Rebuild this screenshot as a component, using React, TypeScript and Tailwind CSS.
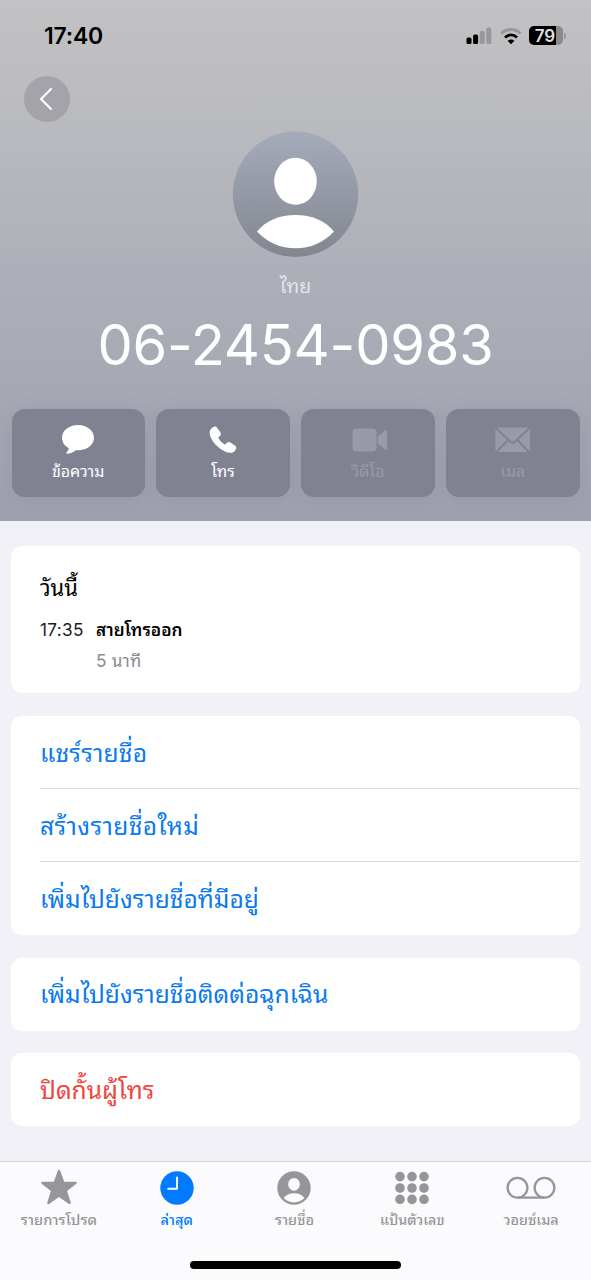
import type { ReactNode } from "react";

type Action = {
  label: string;
  icon: ReactNode;
  disabled?: boolean;
};

type Tab = {
  label: string;
  icon: ReactNode;
  labelClass: string;
  active?: boolean;
};

const actions: Action[] = [
  { label: "ข้อความ", icon: <MessageIcon /> },
  { label: "โทร", icon: <PhoneIcon /> },
  { label: "วิดีโอ", icon: <VideoIcon />, disabled: true },
  { label: "เมล", icon: <MailIcon />, disabled: true },
];

const tabs: Tab[] = [
  { label: "รายการโปรด", icon: <StarIcon />, labelClass: "text-[14.700px]" },
  { label: "ล่าสุด", icon: <ClockIcon />, labelClass: "text-[14.500px]", active: true },
  { label: "รายชื่อ", icon: <PersonIcon />, labelClass: "text-[14.500px]" },
  { label: "แป้นตัวเลข", icon: <KeypadIcon />, labelClass: "text-[14.300px]" },
  { label: "วอยซ์เมล", icon: <VoicemailIcon />, labelClass: "text-[14.300px] pl-[2px]" },
];

function MessageIcon() {
  return (
    <svg width="34" height="32" viewBox="0 0 34 32" fill="currentColor">
      <path d="M17 1C8 1 1 6.700 1 13.700c0 4.300 2.500 8 6.500 10.300.4.300.4.700.2 1.200-.4 1-1.100 2-2 3-.6.700-.2 1.500.7 1.500 2.900-.1 5.500-1.400 7.600-3 .5-.4.900-.4 1.500-.4H17c9 0 16-5.600 16-12.600S26 1 17 1Z" />
    </svg>
  );
}

function PhoneIcon() {
  return (
    <svg width="28" height="28" viewBox="0 0 28 28" fill="currentColor">
      <path d="M.7 5.900C.8 3.500 3 1.300 5.100.7c1.300-.3 2.300.2 3.100 1.300l3.100 4.300c.8 1.200.7 2.400-.2 3.400L9.700 11.200c-.4.400-.4.800-.1 1.300 1.300 2.200 3.500 4.300 5.700 5.700.6.300 1 .3 1.400-.1l1.400-1.400c.9-.9 2.200-1 3.300-.2l4.500 3c1.100.8 1.500 1.800 1.200 2.900-.5 2.200-2.700 4.200-5 4.400-4.900.4-10.500-3.200-14.400-7.200C3.700 15.700.4 10.500.7 5.900Z" />
    </svg>
  );
}

function VideoIcon() {
  return (
    <svg className="ml-[5px]" width="36" height="24" viewBox="0 0 36 24" fill="currentColor">
      <rect x="0.500" y="0.500" width="24" height="23" rx="4" />
      <path d="M26 8.300 32.700 2.700c1.100-.9 2.300-.4 2.300.9v16.800c0 1.300-1.200 1.800-2.300.9L26 15.700Z" />
    </svg>
  );
}

function MailIcon() {
  return (
    <svg width="36" height="26" viewBox="0 0 36 26">
      <rect x="0.500" y="0.500" width="34.500" height="24.500" rx="2" fill="currentColor" />
      <path
        d="m1 1 14.500 13.800c1.500 1.400 3.100 1.400 4.600 0L34.500 1M1.500 25 13 13M34 25 22.500 13"
        fill="none"
        stroke="#808292"
        strokeWidth="2"
      />
    </svg>
  );
}

function StarIcon() {
  return (
    <svg className="mb-[2px]" width="38" height="36" viewBox="0 0 38 36" fill="currentColor">
      <path
        d="m19 2 4.300 11.900h12.300l-9.900 7.700 3.900 12.300L19 26.600 8.400 33.900l3.900-12.300L2.400 13.900h12.300Z"
        stroke="currentColor"
        strokeWidth="2.400"
        strokeLinejoin="round"
      />
    </svg>
  );
}

function ClockIcon() {
  return (
    <svg width="34" height="34" viewBox="0 0 34 34">
      <circle cx="17" cy="17" r="16.700" fill="currentColor" />
      <path d="M17 6.500v11.300H8.200" fill="none" stroke="#fff" strokeWidth="1.900" strokeLinecap="round" strokeLinejoin="round" />
    </svg>
  );
}

function PersonIcon() {
  return (
    <svg width="34" height="34" viewBox="0 0 34 34">
      <circle cx="17" cy="17" r="16.700" fill="currentColor" />
      <ellipse cx="17" cy="13.300" rx="5.800" ry="6.400" fill="#fbfbfd" />
      <path d="M6.700 27.100C8.600 24 12.500 22.300 17 22.300s8.400 1.700 10.300 4.800C24.500 30 21 31.400 17 31.400S9.500 30 6.700 27.100Z" fill="#fbfbfd" />
    </svg>
  );
}

function KeypadIcon() {
  const columns = [5, 17, 29];
  const rows = [5.6, 17, 28.4];
  return (
    <svg width="34" height="34" viewBox="0 0 34 34" fill="currentColor">
      {rows.map((y) => columns.map((x) => <circle key={`${x}-${y}`} cx={x} cy={y} r="4.800" />))}
    </svg>
  );
}

function VoicemailIcon() {
  return (
    <svg className="ml-[2px]" width="50" height="24" viewBox="0 0 50 24" fill="none" stroke="currentColor" strokeWidth="2.300">
      <circle cx="11.500" cy="11.700" r="9.900" />
      <circle cx="38.500" cy="11.700" r="9.900" />
      <path d="M11.500 21.600h27" />
    </svg>
  );
}

function StatusBar() {
  return (
    <div className="flex h-[76px] items-start justify-between pt-[22px] pl-11 pr-[25px]">
      <span className="text-[23px] leading-[28px] font-semibold tracking-[-0.2px] text-black">17:40</span>
      <div className="flex items-center pt-[4px]">
        <svg width="27" height="19" viewBox="0 0 27 19">
          <rect x="0.500" y="11.500" width="5" height="6.500" rx="1.500" />
          <rect x="7.100" y="8.500" width="5" height="9.500" rx="1.500" />
          <rect x="13.700" y="5" width="5" height="13" rx="1.500" fill="#98989c" />
          <rect x="20.300" y="1.500" width="5" height="16.500" rx="1.500" fill="#98989c" />
        </svg>
        <svg className="ml-[7px]" width="22" height="18" viewBox="0 0 23 18" fill="none" strokeWidth="3">
          <path d="M1.300 6.400c5.900-5.600 14.500-5.600 20.400 0" stroke="#98989c" />
          <path d="M5.200 10.500c3.700-3.500 8.900-3.500 12.600 0" stroke="#000" />
          <path d="M8 14c1.900-1.900 5.100-1.900 7 0l-3.500 3.600Z" fill="#000" />
        </svg>
        <div className="ml-[7px] flex h-[19px] w-[34px] items-center justify-center rounded-[5px] bg-[linear-gradient(90deg,#000_80%,#8a8a8e_80%)] text-[17px] leading-none font-semibold text-[#e0e0e3]">
          <span className="-ml-[2px] pt-[1px]">79</span>
        </div>
        <span className="ml-[1px] h-[6px] w-[2px] rounded-r-full bg-[#98989c]" />
      </div>
    </div>
  );
}

function Avatar() {
  return (
    <svg className="ml-[232.500px]" width="126" height="126" viewBox="0 0 126 126">
      <defs>
        <linearGradient id="avatar" x1="0" y1="0" x2="0" y2="1">
          <stop offset="0" stopColor="#a4abba" />
          <stop offset="1" stopColor="#83868f" />
        </linearGradient>
      </defs>
      <circle cx="62.500" cy="63.300" r="62.700" fill="url(#avatar)" />
      <ellipse cx="62.500" cy="50.300" rx="21.300" ry="23.500" fill="#fff" />
      <path d="M24 100.500C33 89.500 46.500 84 62.500 84s29.500 5.500 38.500 16.500C90.500 111.500 77.500 117.300 62.500 117.300S34.500 111.500 24 100.500Z" fill="#fff" />
    </svg>
  );
}

function ActionButton({ label, icon, disabled }: Action) {
  return (
    <button
      disabled={disabled}
      className={`flex h-[88px] flex-col items-center rounded-[13px] bg-[#808292] pt-[14px] shadow-[0_2px_16px_rgba(110,112,130,0.18)] ${disabled ? "text-[#989aa7]" : "text-white"}`}
    >
      <span className="flex h-[34px] items-center">{icon}</span>
      <span className="text-[16px] leading-[28px] whitespace-nowrap">{label}</span>
    </button>
  );
}

function Card({ children }: { children: ReactNode }) {
  return <section className="rounded-[11px] bg-white">{children}</section>;
}

function Row({ label, className }: { label: string; className: string }) {
  return (
    <button className={`flex h-[73px] w-full items-center text-left text-[24.600px] leading-[36px] whitespace-nowrap ${className}`}>
      {label}
    </button>
  );
}

function TabButton({ label, icon, labelClass, active }: Tab) {
  return (
    <button className={`flex flex-col items-center pt-[8px] ${active ? "text-[#007aff]" : "text-[#969698]"}`}>
      <span className="flex h-[36px] items-center">{icon}</span>
      <span className={`mt-[2px] leading-[24px] font-medium whitespace-nowrap ${labelClass}`}>{label}</span>
    </button>
  );
}

export default function App() {
  return (
    <div className="flex h-[1280px] w-[591px] flex-col overflow-hidden bg-[#f2f1f7] font-[Inter,'Noto_Sans_Thai_Looped',Thonburi,Loma,Garuda,Waree,'Noto_Sans_Thai','Noto_Sans',sans-serif]">
      <header className="h-[521px] bg-[linear-gradient(180deg,#c2c2c4_0%,#b8b9be_28%,#abadb7_58%,#9fa0ad_100%)]">
        <StatusBar />
        <div className="h-[55px] pl-6">
          <button className="flex size-[46px] items-center justify-center rounded-full bg-[#a4a3a9]">
            <svg className="-ml-[3px]" width="14" height="24" viewBox="0 0 14 24" fill="none" stroke="#fff" strokeWidth="2.200" strokeLinecap="round" strokeLinejoin="round">
              <path d="M12 2 2 12l10 10" />
            </svg>
          </button>
        </div>
        <Avatar />
        <p className="mt-[13px] text-center text-[19.500px] leading-[32px] text-[#e4e4e9]">ไทย</p>
        {/* calt off keeps the hyphens at their low position between digits */}
        <h1 className="mt-[12px] text-center text-[56px] leading-[62px] font-normal tracking-[-0.2px] whitespace-nowrap text-white [font-feature-settings:'calt'_0]">
          06-2454-0983
        </h1>
        <div className="mt-[33px] grid grid-cols-4 gap-[11.500px] px-[11.500px]">
          {actions.map((action) => (
            <ActionButton key={action.label} {...action} />
          ))}
        </div>
      </header>

      <main className="flex flex-1 flex-col gap-[22.800px] pt-[25px] pr-[11.500px] pl-[11px]">
        <Card>
          <div className="h-[147px] pt-[22px] pl-[29px]">
            <h2 className="text-[22px] leading-[40px] font-normal text-black">วันนี้</h2>
            <div className="grid grid-cols-[56px_1fr] text-[17.200px] leading-[31px]">
              <span className="mt-[6px] tracking-[0.3px] text-[#1c1c1e]">17:35</span>
              <span className="mt-[6px] font-semibold text-black">สายโทรออก</span>
              <span className="col-start-2 tracking-[0.2px] text-[#8a8a8e]">5 นาที</span>
            </div>
          </div>
        </Card>
        <Card>
          <div className="divide-y divide-[#d9d9dc] pl-[29px]">
            <Row label="แชร์รายชื่อ" className="pt-[2px] tracking-[0.2px] text-[#0a7aee]" />
            <Row label="สร้างรายชื่อใหม่" className="pt-[2px] tracking-[0.4px] text-[#0a7aee]" />
            <Row label="เพิ่มไปยังรายชื่อที่มีอยู่" className="pt-[2px] text-[#0a7aee]" />
          </div>
        </Card>
        <Card>
          <div className="pl-[29px]">
            <Row label="เพิ่มไปยังรายชื่อติดต่อฉุกเฉิน" className="text-[#0a7aee]" />
          </div>
        </Card>
        <Card>
          <div className="pl-[29px]">
            <Row label="ปิดกั้นผู้โทร" className="text-[#f0453d]" />
          </div>
        </Card>
      </main>

      <nav className="flex h-[119px] flex-col border-t border-[#d4d4da] bg-[#fbfbfd]">
        <div className="grid grid-cols-5 pr-[2px]">
          {tabs.map((tab) => (
            <TabButton key={tab.label} {...tab} />
          ))}
        </div>
        <div className="mx-auto mt-auto mb-[11px] h-[8px] w-[211px] rounded-full bg-black" />
      </nav>
    </div>
  );
}
